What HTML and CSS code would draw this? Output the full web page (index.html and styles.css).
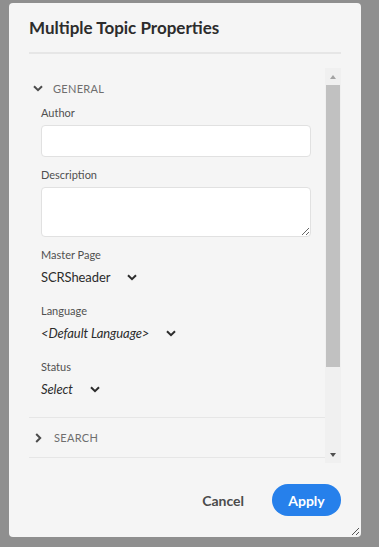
FILE: index.html
```html
<!DOCTYPE html>
<html lang="en">
<head>
    <meta charset="UTF-8">
    <meta name="viewport" content="width=device-width, initial-scale=1.0">
    <title>Multiple Topic Properties</title>
    <link rel="stylesheet" href="styles.css">
</head>
<body>
    <div class="dialog">
        <h1 class="dialog-title">Multiple Topic Properties</h1>
        <div class="divider"></div>

        <div class="panel">
            <div class="panel-content">
                <div class="section-head">
                    <svg class="chev-down" width="10" height="7" viewBox="0 0 10 7"><path d="M1 1.2 L5 5.2 L9 1.2" fill="none" stroke="#4b4b4b" stroke-width="2"/></svg>
                    <span>GENERAL</span>
                </div>
                <div class="fields">
                    <label class="field-label">Author</label>
                    <input class="text-input" type="text">

                    <label class="field-label gap">Description</label>
                    <textarea class="text-area"></textarea>

                    <label class="field-label gap">Master Page</label>
                    <div class="picker">
                        <span>SCRSheader</span>
                        <svg width="10" height="7" viewBox="0 0 10 7"><path d="M1 1.2 L5 5.2 L9 1.2" fill="none" stroke="#2c2c2c" stroke-width="2"/></svg>
                    </div>

                    <label class="field-label gap-lg">Language</label>
                    <div class="picker placeholder">
                        <span>&lt;Default Language&gt;</span>
                        <svg width="10" height="7" viewBox="0 0 10 7"><path d="M1 1.2 L5 5.2 L9 1.2" fill="none" stroke="#2c2c2c" stroke-width="2"/></svg>
                    </div>

                    <label class="field-label gap-lg">Status</label>
                    <div class="picker placeholder">
                        <span>Select</span>
                        <svg width="10" height="7" viewBox="0 0 10 7"><path d="M1 1.2 L5 5.2 L9 1.2" fill="none" stroke="#2c2c2c" stroke-width="2"/></svg>
                    </div>
                </div>
                <div class="section-row">
                    <svg width="7" height="10" viewBox="0 0 7 10"><path d="M1.2 1 L5.2 5 L1.2 9" fill="none" stroke="#4b4b4b" stroke-width="2"/></svg>
                    <span>SEARCH</span>
                </div>
            </div>
            <div class="scrollbar">
                <div class="scroll-btn up"></div>
                <div class="scroll-track"><div class="scroll-thumb"></div></div>
                <div class="scroll-btn down"></div>
            </div>
        </div>

        <div class="actions">
            <button class="btn-quiet">Cancel</button>
            <button class="btn-cta">Apply</button>
        </div>

        <svg class="grip" width="9" height="9" viewBox="0 0 9 9"><path d="M8 1 L1 8 M8 5 L5 8" stroke="#555" stroke-width="1"/></svg>
    </div>
</body>
</html>
```

FILE: styles.css
```css
body {
    background-color: #8f8f8f;
    margin: 0;
    padding: 0;
    font-family: Lato, "Noto Sans", sans-serif;
}
.dialog {
    position: relative;
    box-sizing: border-box;
    width: 352px;
    height: 534px;
    margin: 3px 0 0 9px;
    padding: 13px 20px 0 20px;
    background-color: #f5f5f5;
    border-radius: 4px;
}
.dialog-title {
    margin: 0;
    font-size: 17px;
    line-height: 24px;
    font-weight: 700;
    color: #2c2c2c;
}
.divider {
    height: 2px;
    background-color: #e6e6e6;
    margin-top: 12px;
}
.panel {
    display: flex;
    height: 395px;
    margin-top: 14px;
}
.panel-content {
    flex: 1;
    overflow: hidden;
}
.section-head {
    display: flex;
    align-items: center;
    height: 16px;
    margin-top: 12px;
    padding-left: 4px;
    font-size: 11px;
    letter-spacing: 0.3px;
    color: #6e6e6e;
}
.section-head span {
    margin-left: 10px;
}
.fields {
    display: flex;
    flex-direction: column;
    align-items: flex-start;
    padding: 9px 14px 18px 12px;
    border-bottom: 1px solid #e6e6e6;
}
.field-label {
    font-size: 11px;
    line-height: 16px;
    color: #505050;
    margin-bottom: 4px;
}
.field-label.gap {
    margin-top: 10px;
}
.field-label.gap-lg {
    margin-top: 16px;
}
.text-input,
.text-area {
    box-sizing: border-box;
    width: 100%;
    margin: 0;
    border: 1px solid #e1e1e1;
    border-radius: 4px;
    background-color: #fff;
    font-family: inherit;
}
.text-input {
    height: 32px;
}
.text-area {
    height: 50px;
    resize: both;
}
.picker {
    display: flex;
    align-items: center;
    gap: 17px;
    height: 20px;
    font-size: 13px;
    letter-spacing: -0.1px;
    color: #2c2c2c;
}
.picker.placeholder span {
    font-style: italic;
}
.section-row {
    display: flex;
    align-items: center;
    height: 39px;
    padding-left: 6px;
    border-bottom: 1px solid #e6e6e6;
    font-size: 11px;
    letter-spacing: 0.3px;
    color: #6e6e6e;
}
.section-row span {
    margin-left: 12px;
}
.scrollbar {
    display: flex;
    flex-direction: column;
    width: 16px;
    background-color: #f0f0f0;
}
.scroll-btn {
    height: 17px;
    display: flex;
    align-items: center;
    justify-content: center;
}
.scroll-btn.up::before {
    content: "";
    border-left: 3.5px solid transparent;
    border-right: 3.5px solid transparent;
    border-bottom: 4px solid #a3a3a3;
}
.scroll-btn.down::before {
    content: "";
    border-left: 3.5px solid transparent;
    border-right: 3.5px solid transparent;
    border-top: 4px solid #505050;
}
.scroll-track {
    flex: 1;
    padding: 0 1px 0 1px;
}
.scroll-thumb {
    height: 282px;
    background-color: #c1c1c1;
}
.actions {
    display: flex;
    justify-content: flex-end;
    align-items: center;
    gap: 14px;
    margin-top: 21px;
}
.btn-quiet,
.btn-cta {
    font-family: inherit;
    font-size: 14px;
    font-weight: 700;
    height: 32px;
    border: none;
    border-radius: 16px;
    padding: 0 14px;
}
.btn-quiet {
    background: none;
    color: #4b4b4b;
}
.btn-cta {
    background-color: #2680eb;
    color: #fff;
    width: 69px;
}
.grip {
    position: absolute;
    right: 1px;
    bottom: 1px;
}
```
